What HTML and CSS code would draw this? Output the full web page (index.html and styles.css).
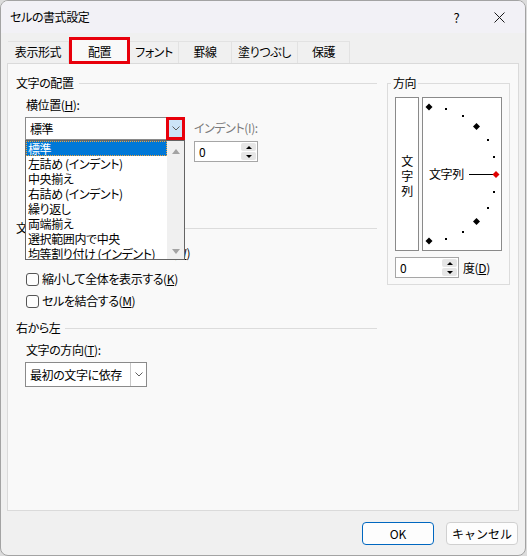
FILE: index.html
```html
<!DOCTYPE html>
<html lang="ja">
<head>
    <meta charset="UTF-8">
    <title>セルの書式設定</title>
    <link rel="stylesheet" href="styles.css">
</head>
<body>
    <div class="dlg">
        <div class="dlg-title">
            <span class="dlg-title-txt">セルの書式設定</span>
            <span class="cap-btn">?</span>
            <span class="cap-btn cap-cls">
                <svg width="11" height="11" viewBox="0 0 11 11"><path d="M0.5 0.5 L10.5 10.5 M10.5 0.5 L0.5 10.5" stroke="#1b1b1b" stroke-width="1" fill="none"/></svg>
            </span>
        </div>
        <div class="dlg-body">
            <div class="tabs">
                <div class="tab tab-fmt">表示形式</div>
                <div class="tab tab-algn">配置</div>
                <div class="tab tab-font">フォント</div>
                <div class="tab tab-brdr">罫線</div>
                <div class="tab tab-fill">塗りつぶし</div>
                <div class="tab tab-prot">保護</div>
            </div>
            <div class="tab-pnl">
                <div class="algn-col">
                    <div class="grp-hdr"><span>文字の配置</span></div>
                    <div class="fld-lbl hz-lbl">横位置(<u>H</u>):</div>
                    <div class="hz-row">
                        <div class="cmb-wrap">
                            <div class="cmb cmb-hz">
                                <span class="cmb-txt">標準</span>
                                <span class="cmb-btn cmb-btn-hot">
                                    <svg width="8" height="5" viewBox="0 0 8 5"><path d="M0.5 0.5 L4 4 L7.5 0.5" stroke="#5f5f5f" fill="none"/></svg>
                                </span>
                            </div>
                            <div class="drop-lst">
                                <div class="drop-items">
                                    <div class="drop-item drop-sel">標準</div>
                                    <div class="drop-item">左詰め (インデント)</div>
                                    <div class="drop-item">中央揃え</div>
                                    <div class="drop-item">右詰め (インデント)</div>
                                    <div class="drop-item">繰り返し</div>
                                    <div class="drop-item">両端揃え</div>
                                    <div class="drop-item">選択範囲内で中央</div>
                                    <div class="drop-item">均等割り付け (インデント)</div>
                                </div>
                                <div class="drop-scr">
                                    <span class="scr-up"></span>
                                    <span class="scr-dn"></span>
                                </div>
                            </div>
                        </div>
                        <div class="ind-box">
                            <div class="fld-dis">インデント(I):</div>
                            <div class="spin spin-ind">
                                <span class="spin-val">0</span>
                                <span class="spin-btns"><span class="spin-up"></span><span class="spin-dn"></span></span>
                            </div>
                        </div>
                    </div>
                    <div class="grp-hdr ctl-hdr"><span>文字の制御</span></div>
                    <div class="chk-row chk-wrap"><span class="chk"></span><span>折り返して全体を表示する(<u>W</u>)</span></div>
                    <div class="chk-row chk-shrk"><span class="chk"></span><span>縮小して全体を表示する(<u>K</u>)</span></div>
                    <div class="chk-row chk-mrg"><span class="chk"></span><span>セルを結合する(<u>M</u>)</span></div>
                    <div class="grp-hdr rtl-hdr"><span>右から左</span></div>
                    <div class="fld-lbl dir-lbl">文字の方向(<u>T</u>):</div>
                    <div class="cmb cmb-dir">
                        <span class="cmb-txt">最初の文字に依存</span>
                        <span class="cmb-btn cmb-btn-sep">
                            <svg width="8" height="5" viewBox="0 0 8 5"><path d="M0.5 0.5 L4 4 L7.5 0.5" stroke="#5f5f5f" fill="none"/></svg>
                        </span>
                    </div>
                </div>
                <fieldset class="ori-grp">
                    <legend>方向</legend>
                    <div class="ori-boxes">
                        <div class="ori-vert"><span>文</span><span>字</span><span>列</span></div>
                        <div class="ori-dial">
                            <svg width="78" height="152" viewBox="0 0 78 152">
                                <polygon points="6,5.5 9.5,9 6,12.5 2.5,9" fill="#000"/>
                                <rect x="22" y="10" width="2" height="2" fill="#000"/>
                                <rect x="39" y="17" width="2" height="2" fill="#000"/>
                                <polygon points="53.5,25 57,28.5 53.5,32 50,28.5" fill="#000"/>
                                <rect x="64" y="41" width="2" height="2" fill="#000"/>
                                <rect x="70" y="58" width="2" height="2" fill="#000"/>
                                <line x1="46" y1="76.5" x2="70" y2="76.5" stroke="#000" stroke-width="1"/>
                                <polygon points="73,73 76.5,76.5 73,80 69.5,76.5" fill="#e00000"/>
                                <rect x="70" y="93" width="2" height="2" fill="#000"/>
                                <rect x="64" y="109" width="2" height="2" fill="#000"/>
                                <polygon points="53.5,120 57,123.5 53.5,127 50,123.5" fill="#000"/>
                                <rect x="39" y="133" width="2" height="2" fill="#000"/>
                                <rect x="22" y="140" width="2" height="2" fill="#000"/>
                                <polygon points="6,139.5 9.5,143 6,146.5 2.5,143" fill="#000"/>
                                <text x="6" y="81" class="dial-txt">文字列</text>
                            </svg>
                        </div>
                    </div>
                    <div class="deg-row">
                        <div class="spin spin-deg">
                            <span class="spin-val">0</span>
                            <span class="spin-btns"><span class="spin-up"></span><span class="spin-dn"></span></span>
                        </div>
                        <span>度(<u>D</u>)</span>
                    </div>
                </fieldset>
            </div>
            <div class="dlg-ftr">
                <button class="dlg-btn ok-btn">OK</button>
                <button class="dlg-btn">キャンセル</button>
            </div>
        </div>
    </div>
</body>
</html>
```

FILE: styles.css
```css
*, *:before, *:after {
    margin: 0;
    padding: 0;
    box-sizing: border-box;
}
body {
    background: #dcdcdc;
    font-family: "Noto Sans CJK JP", "Noto Sans", sans-serif;
    font-size: 12px;
    color: #000;
    font-feature-settings: "palt" 1;
    letter-spacing: -0.4px;
}
body * {
    font-family: "Noto Sans CJK JP", "Noto Sans", sans-serif;
}
.dlg {
    width: 526px;
    height: 556px;
    border: 1px solid #a3a3a3;
    border-radius: 8px;
    background: #f0f0f0;
    overflow: hidden;
    display: flex;
    flex-direction: column;
}
.dlg-title {
    height: 32px;
    display: flex;
    align-items: center;
    background: #f2f1f6;
    padding-left: 9px;
}
.dlg-title-txt {
    flex: 1;
    line-height: 16px;
}
.cap-btn {
    width: 43px;
    height: 32px;
    display: flex;
    align-items: center;
    justify-content: center;
    font-size: 13px;
}
.cap-cls {
    margin-right: 4px;
}
.dlg-body {
    flex: 1;
    padding: 0 6px;
    display: flex;
    flex-direction: column;
}

/* tabs */
.tabs {
    display: flex;
    align-items: flex-end;
    height: 26px;
    margin-top: 4px;
    padding-left: 1px;
}
.tab {
    height: 22px;
    line-height: 20px;
    text-align: center;
    background: #f0f0f0;
    border-top: 1px solid #e2e2e2;
    border-right: 1px solid #e2e2e2;
}
.tab-fmt { width: 61px; }
.tab-font { width: 49px; }
.tab-brdr { width: 53px; }
.tab-fill { width: 66px; }
.tab-prot { width: 52px; }
.tab-algn {
    width: 61px;
    height: 27px;
    margin-bottom: -1px;
    padding-top: 2px;
    border: 3px solid #e8000b;
    background: #f9f9f9;
    position: relative;
    z-index: 1;
}
.tab-pnl {
    height: 448px;
    border: 1px solid #dadada;
    background: #f9f9f9;
    display: flex;
    align-items: flex-start;
    padding: 11px 0 0 8px;
}

/* left column */
.algn-col {
    width: 361px;
}
.grp-hdr {
    display: flex;
    align-items: center;
    height: 16px;
    line-height: 16px;
}
.grp-hdr:after {
    content: "";
    flex: 1;
    border-top: 1px solid #dcdcdc;
    margin-left: 5px;
}
.fld-lbl {
    height: 16px;
    line-height: 16px;
    padding-left: 10px;
}
.hz-lbl { margin-top: 6px; }
.ctl-hdr { margin-top: 58px; }
.chk-wrap { margin-top: 9px; }
.chk-shrk { margin-top: 10px; }
.chk-mrg { margin-top: 6px; }
.rtl-hdr { margin-top: 11px; }
.dir-lbl { margin-top: 6px; }

.hz-row {
    display: flex;
    align-items: flex-start;
    margin-top: 4px;
    padding-left: 9px;
}
.cmb-wrap {
    position: relative;
}
.cmb {
    display: flex;
    height: 23px;
    border: 1px solid #8a8a8a;
    background: #fff;
}
.cmb-hz {
    width: 160px;
}
.cmb-dir {
    width: 122px;
    height: 25px;
    margin: 4px 0 0 9px;
}
.cmb-txt {
    flex: 1;
    padding-left: 4px;
    line-height: 21px;
    white-space: nowrap;
}
.cmb-dir .cmb-txt {
    line-height: 23px;
}
.cmb-btn {
    width: 17px;
    display: flex;
    align-items: center;
    justify-content: center;
}
.cmb-btn-hot {
    width: 19px;
    margin: -1px -1px -1px 0;
    border: 3px solid #e8000b;
    background: #cce4f7;
}
.cmb-btn-sep {
    width: 16px;
    border-left: 1px solid #c8c8c8;
}

/* open list */
.drop-lst {
    position: absolute;
    top: 23px;
    left: 0;
    width: 160px;
    height: 120px;
    display: flex;
    border: 1px solid #646464;
    background: #fff;
    overflow: hidden;
    z-index: 2;
}
.drop-items {
    flex: 1;
}
.drop-item {
    height: 15px;
    line-height: 15px;
    padding-left: 2px;
    white-space: nowrap;
}
.drop-sel {
    background: #0078d7;
    color: #fff;
    outline: 1px dotted #f2a43a;
    outline-offset: -1px;
}
.drop-scr {
    width: 17px;
    background: #f0f0f0;
    display: flex;
    flex-direction: column;
    justify-content: space-between;
    align-items: center;
    padding: 8px 0 5px;
}
.scr-up, .scr-dn {
    width: 0;
    height: 0;
    border-left: 4px solid transparent;
    border-right: 4px solid transparent;
}
.scr-up { border-bottom: 5px solid #a3a3a3; }
.scr-dn { border-top: 5px solid #a3a3a3; }

/* indent */
.ind-box {
    margin-left: 9px;
    padding-top: 3px;
}
.fld-dis {
    height: 16px;
    line-height: 16px;
    color: #7a7a7a;
}
.spin {
    display: flex;
    width: 64px;
    height: 21px;
    border: 1px solid #a6a6a6;
    background: #fff;
}
.spin-ind {
    margin-top: 5px;
}
.spin-val {
    flex: 1;
    padding-left: 4px;
    line-height: 19px;
}
.spin-btns {
    width: 16px;
    display: flex;
    flex-direction: column;
    gap: 1px;
    padding: 1px 1px 1px 0;
}
.spin-up, .spin-dn {
    flex: 1;
    background: #e6e6e6;
    border-radius: 2px;
    display: flex;
    align-items: center;
    justify-content: center;
}
.spin-up:before, .spin-dn:before {
    content: "";
    border-left: 3px solid transparent;
    border-right: 3px solid transparent;
}
.spin-up:before { border-bottom: 3px solid #000; }
.spin-dn:before { border-top: 3px solid #000; }

/* checkboxes */
.chk-row {
    display: flex;
    align-items: center;
    gap: 3px;
    height: 16px;
    line-height: 16px;
    padding-left: 10px;
    white-space: nowrap;
}
.chk {
    width: 13px;
    height: 13px;
    border: 1px solid #555;
    border-radius: 3px;
    background: #fdfdfd;
}

/* orientation */
.ori-grp {
    width: 123px;
    min-width: 0;
    margin-left: 10px;
    border: 1px solid #dcdcdc;
    padding: 0 0 6px 7px;
}
.ori-grp legend {
    margin-left: -4px;
    padding: 0 2px;
    line-height: 16px;
}
.ori-boxes {
    display: flex;
    gap: 3px;
    margin-top: 6px;
}
.ori-vert {
    width: 24px;
    height: 154px;
    border: 1px solid #8a8a8a;
    background: #fff;
    display: flex;
    flex-direction: column;
    align-items: center;
    justify-content: center;
    line-height: 15px;
    padding-top: 2px;
}
.ori-dial {
    width: 80px;
    height: 154px;
    border: 1px solid #8a8a8a;
    background: #fff;
}
.ori-dial svg {
    display: block;
}
.dial-txt {
    font-size: 12px;
    fill: #000;
}
.deg-row {
    display: flex;
    align-items: center;
    gap: 4px;
    margin-top: 6px;
}

/* footer */
.dlg-ftr {
    display: flex;
    justify-content: flex-end;
    gap: 12px;
    margin-top: 11px;
    padding-right: 1px;
}
.dlg-btn {
    width: 72px;
    height: 23px;
    border: 1px solid #d0d0d0;
    border-radius: 4px;
    background: #fdfdfd;
    font-size: 12px;
    line-height: 21px;
    color: #000;
}
.ok-btn {
    border-color: #0067c0;
}
```
